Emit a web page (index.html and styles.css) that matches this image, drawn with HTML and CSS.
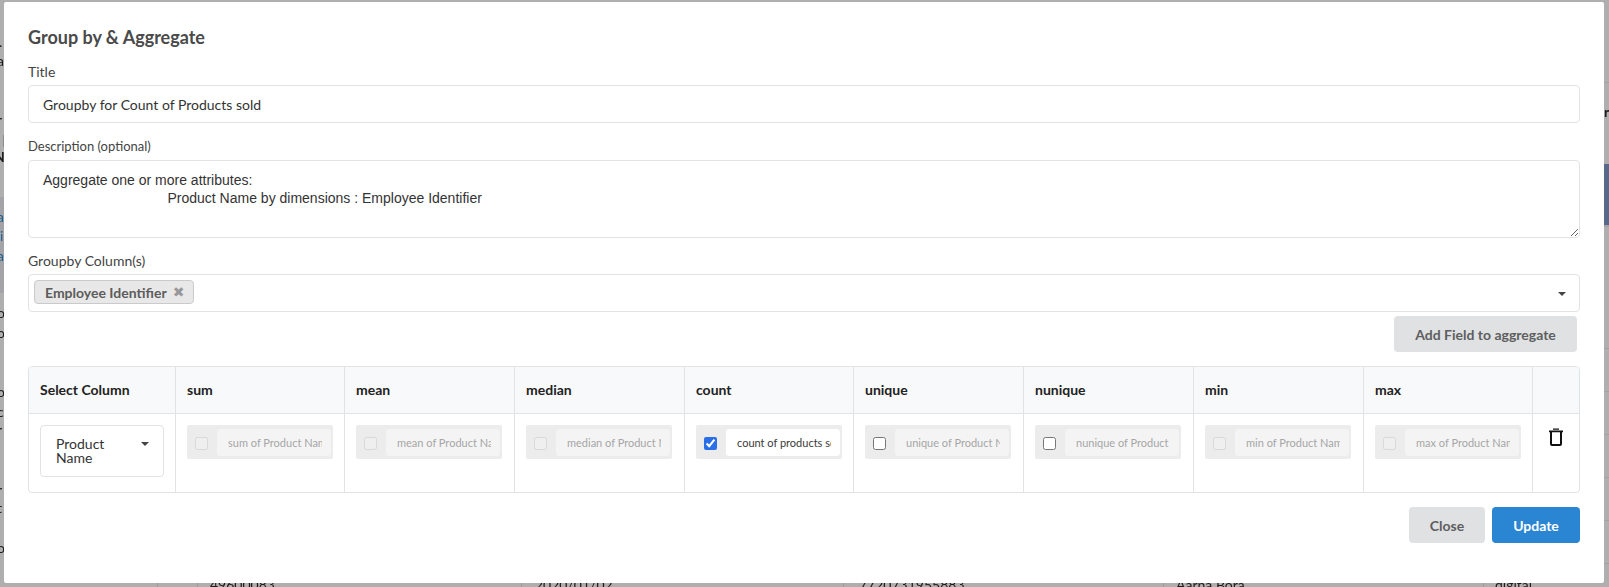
FILE: index.html
```html
<!DOCTYPE html>
<html lang="en">
<head>
<meta charset="utf-8">
<title>Group by &amp; Aggregate</title>
<link rel="stylesheet" href="styles.css">
</head>
<body>
<div class="backdrop" aria-hidden="true">
  <span class="blue-band"></span>
  <span class="grey-band"></span>
  <span class="edge-tick"></span>
  <span class="hline hl1"></span><span class="hline hl2"></span><span class="hline hl3"></span><span class="hline hl4"></span><span class="hline hl5"></span><span class="hline hl6"></span><span class="hline hl7"></span><span class="hline hl8"></span>
  <span class="vline vl1"></span><span class="vline vl2"></span><span class="vline vl3"></span><span class="vline vl4"></span><span class="vline vl5"></span><span class="vline vl6"></span>
  <span class="peek pl g1">.</span><span class="peek pl g2">a</span><span class="peek pl g3">r</span><span class="peek pl g4">N</span>
  <span class="peek pl link g5">a</span><span class="peek pl link g6">i</span><span class="peek pl link g7">a</span>
  <span class="peek pl g8">o</span><span class="peek pl g9">o</span><span class="peek pl g10">o</span><span class="peek pl g11">c</span><span class="peek pl g12">r</span><span class="peek pl g13">r</span><span class="peek pl g14">t</span><span class="peek pl g15">o</span>
  <span class="peek pr">r</span>
  <span class="cell-text c1">49600083</span><span class="cell-text c2">2020/01/02</span><span class="cell-text c3">7720731955883</span><span class="cell-text c4">Aarna Bora</span><span class="cell-text c5">digital</span>
</div>

<div class="modal">
  <h2 class="modal-title">Group by &amp; Aggregate</h2>

  <div class="field field-title">
    <label class="field-label" for="title">Title</label>
    <input class="control" id="title" type="text" value="Groupby for Count of Products sold">
  </div>

  <div class="field field-desc">
    <label class="field-label" for="desc">Description (optional)</label>
    <textarea class="control textarea" id="desc">Aggregate one or more attributes:
                                Product Name by dimensions : Employee Identifier</textarea>
  </div>

  <div class="field field-group">
    <div class="field-label">Groupby Column(s)</div>
    <div class="control multi">
      <span class="tag">Employee Identifier<span class="tag-x">✖</span></span>
      <span class="caret"></span>
    </div>
  </div>

  <div class="add-row"><button class="btn btn-add" type="button">Add Field to aggregate</button></div>

  <div class="grid">
    <div class="th col1">Select Column</div>
    <div class="th">sum</div>
    <div class="th">mean</div>
    <div class="th">median</div>
    <div class="th">count</div>
    <div class="th">unique</div>
    <div class="th">nunique</div>
    <div class="th">min</div>
    <div class="th">max</div>
    <div class="th th-last"></div>

    <div class="td col1">
      <div class="col-select"><span class="col-select-text">Product Name</span><span class="caret caret-select"></span></div>
    </div>
    <div class="td"><div class="agg agg-off"><input type="checkbox" disabled><input class="agg-input" type="text" disabled placeholder="sum of Product Name"></div></div>
    <div class="td"><div class="agg agg-off"><input type="checkbox" disabled><input class="agg-input" type="text" disabled placeholder="mean of Product Name"></div></div>
    <div class="td"><div class="agg agg-off"><input type="checkbox" disabled><input class="agg-input" type="text" disabled placeholder="median of Product Name"></div></div>
    <div class="td"><div class="agg"><input type="checkbox" checked><input class="agg-input agg-active" type="text" value="count of products sold"></div></div>
    <div class="td"><div class="agg"><input type="checkbox"><input class="agg-input" type="text" disabled placeholder="unique of Product Name"></div></div>
    <div class="td"><div class="agg"><input type="checkbox"><input class="agg-input" type="text" disabled placeholder="nunique of Product Name"></div></div>
    <div class="td"><div class="agg agg-off"><input type="checkbox" disabled><input class="agg-input" type="text" disabled placeholder="min of Product Name"></div></div>
    <div class="td"><div class="agg agg-off"><input type="checkbox" disabled><input class="agg-input" type="text" disabled placeholder="max of Product Name"></div></div>
    <div class="td td-last">
      <svg class="trash" viewBox="0 0 14 18" width="14" height="18" aria-hidden="true">
        <path d="M0 2.4h14v1.8H0zM4 0.4h6v1.4H4z" fill="#111"/>
        <path d="M2 4v12a1 1 0 0 0 1 1h8a1 1 0 0 0 1-1V4" fill="none" stroke="#111" stroke-width="2"/>
      </svg>
    </div>
  </div>

  <div class="actions">
    <button class="btn btn-close" type="button">Close</button>
    <button class="btn btn-primary" type="button">Update</button>
  </div>
</div>
</body>
</html>
```
FILE: styles.css
```css
* { box-sizing: border-box; }

html, body {
  margin: 0;
  height: 100%;
  overflow: hidden;
}

body {
  background: #afafaf;
  font-family: Lato, "Liberation Sans", sans-serif;
  font-size: 14px;
  color: #444;
}

/* Page dimmed behind the modal: only slivers show around its edges */
.backdrop {
  position: fixed;
  inset: 0;
  overflow: hidden;
}

.blue-band { position: absolute; left: 1604px; right: 0; top: 164px; height: 61px; background: #566a8c; }
.grey-band { position: absolute; left: 0; width: 4px; top: 197px; height: 96px; background: #a4a4a8; }
.edge-tick { position: absolute; left: 3px; width: 1px; top: 135px; height: 12px; background: #8d8d8d; }

.hline { position: absolute; left: 1604px; right: 0; height: 1px; background: #a3a3a3; }
.hl1 { top: 82px; }
.hl2 { top: 225px; height: 2px; }
.hl3 { top: 348px; }
.hl4 { top: 391px; }
.hl5 { top: 434px; }
.hl6 { top: 477px; }
.hl7 { top: 520px; }
.hl8 { top: 563px; }

.vline { position: absolute; top: 580px; bottom: 0; width: 1px; background: #9c9c9c; }
.vl1 { left: 157px; }
.vl2 { left: 197px; }
.vl3 { left: 521px; }
.vl4 { left: 843px; }
.vl5 { left: 1163px; }
.vl6 { left: 1483px; }

.peek {
  position: absolute;
  font-size: 14px;
  line-height: 18px;
  color: #1d1d1d;
}
.pl { left: -3px; }
.pr { left: 1604px; top: 103px; font-weight: 700; }
.link { color: #1d5f92; }
.g1 { top: 33px; left: -1px; }
.g2 { top: 52px; }
.g3 { top: 111px; }
.g4 { top: 148px; font-weight: 700; left: -6px; }
.g5 { top: 208px; }
.g6 { top: 227px; left: 0; }
.g7 { top: 247px; }
.g8 { top: 304px; }
.g9 { top: 324px; }
.g10 { top: 383px; }
.g11 { top: 403px; }
.g12 { top: 421px; }
.g13 { top: 481px; }
.g14 { top: 499px; }
.g15 { top: 539px; }

.cell-text {
  position: absolute;
  top: 576px;
  font-size: 14px;
  line-height: 18px;
  color: #1d1d1d;
  white-space: nowrap;
}
.c1 { left: 210px; }
.c2 { left: 535px; }
.c3 { left: 859px; }
.c4 { left: 1176px; }
.c5 { left: 1495px; }

/* Modal */
.modal {
  position: absolute;
  left: 4px;
  top: 2px;
  width: 1600px;
  height: 581px;
  padding: 22px 24px 0;
  background: #fff;
  border-radius: 2px;
}

.modal-title {
  margin: 0 0 13px;
  font-size: 18px;
  line-height: 26px;
  font-weight: 700;
  color: #4a4a4a;
}

.field-title { margin-bottom: 14px; }
.field-desc { margin-bottom: 14px; }

.field-label {
  display: block;
  margin-bottom: 4px;
  font-size: 14px;
  line-height: 18px;
  color: #444;
}

.field-desc .field-label {
  margin-bottom: 5px;
  font-size: 13px;
}

.control {
  display: block;
  width: 100%;
  height: 38px;
  padding: 0 14px;
  border: 1px solid #e2e3e4;
  border-radius: 4px;
  background: #fff;
  font-family: Lato, "Liberation Sans", sans-serif;
  font-size: 14px;
  color: #333;
  outline: none;
}

.textarea {
  height: 78px;
  padding: 10px 14px;
  font-family: "Liberation Sans", Arial, sans-serif;
  line-height: 18px;
  resize: vertical;
}

.multi {
  position: relative;
  display: flex;
  align-items: center;
  padding: 0 5px 2px;
}

.tag {
  display: inline-flex;
  align-items: center;
  height: 24px;
  padding: 0 9px 0 10px;
  border: 1px solid #c9cacb;
  border-radius: 4px;
  background: #e8e8e8;
  font-weight: 700;
  color: #5c5c5c;
}

.tag-x {
  margin-left: 6px;
  font-family: "DejaVu Sans", sans-serif;
  font-size: 14px;
  line-height: 1;
  color: #989898;
}

.caret {
  position: absolute;
  right: 13px;
  top: 17px;
  border-left: 4px solid transparent;
  border-right: 4px solid transparent;
  border-top: 4px solid #444;
}

.add-row {
  display: flex;
  justify-content: flex-end;
  margin: 4px 3px 14px 0;
}

.btn {
  height: 36px;
  border: 0;
  border-radius: 4px;
  font-family: Lato, "Liberation Sans", sans-serif;
  font-size: 14px;
  font-weight: 700;
  color: #5d5e5f;
  background: #e0e1e2;
}

.btn-add { width: 183px; }
.btn-close { width: 76px; }
.btn-primary { width: 88px; background: #2a85d2; color: #fff; }

/* Aggregation grid */
.grid {
  display: grid;
  grid-template-columns: 147px 169px 170px 170px 169px 170px 170px 170px 169px 1fr;
  grid-template-rows: 47px 79px;
  width: 1552px;
  height: 127px;
  border: 1px solid #e2e3e5;
  border-radius: 4px;
  overflow: hidden;
}

.th, .td {
  border-right: 1px solid #e2e3e5;
  padding: 0 11px;
}

.th {
  display: flex;
  align-items: center;
  padding-bottom: 2px;
  background: #f8f9fa;
  border-bottom: 1px solid #e2e3e5;
  font-weight: 700;
  color: #222;
}

.td { padding-top: 11px; }
.col1 { padding-left: 11px; }
.th-last, .td-last { border-right: 0; }

.col-select {
  position: relative;
  display: flex;
  width: 124px;
  height: 52px;
  padding: 11px 34px 0 15px;
  border: 1px solid #e2e3e5;
  border-radius: 4px;
  line-height: 14px;
  color: #333;
}

.caret-select { right: 14px; top: 16px; }

.agg {
  display: flex;
  align-items: center;
  width: 146px;
  height: 34px;
  padding: 0 1px 0 8px;
  gap: 8px;
  background: #ececec;
  border-radius: 2px;
}

.agg input[type="checkbox"] {
  flex: none;
  width: 13px;
  height: 13px;
  margin: 2px 0 0;
  accent-color: #2b6fe8;
}

.agg-input {
  flex: 1;
  min-width: 0;
  height: 29px;
  padding: 0 9px 0 11px;
  border: 1px solid #ececec;
  border-radius: 4px;
  background: #f4f4f4;
  font-family: Lato, "Liberation Sans", sans-serif;
  font-size: 11px;
  color: #3a3a3a;
  outline: none;
}

.agg-input::placeholder { color: #a6a6a6; opacity: 1; }
.agg-active { background: #fff; }
.agg-off input[type="checkbox"] { opacity: 0.55; }

.td-last {
  display: flex;
  justify-content: center;
  padding: 14px 0 0;
}

.trash { display: block; }

.actions {
  display: flex;
  justify-content: flex-end;
  gap: 7px;
  margin-top: 14px;
}
```
